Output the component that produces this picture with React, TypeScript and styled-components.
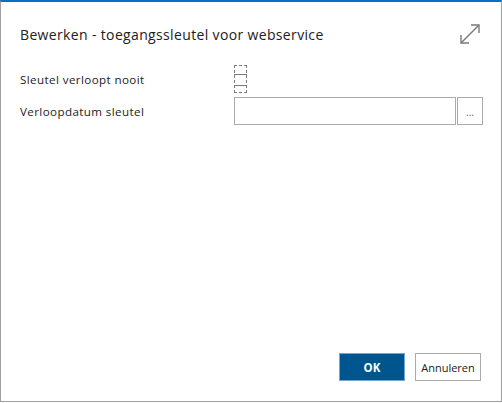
import styled, { createGlobalStyle } from "styled-components";

const GlobalStyle = createGlobalStyle`
  html, body { margin: 0; padding: 0; background: #ffffff; }
  body { font-family: "Open Sans", "Noto Sans", sans-serif; color: #212121; }
`;

const Dialog = styled.div`
  box-sizing: border-box;
  width: 502px;
  height: 402px;
  border: 1px solid #a0a0a0;
  border-top: 2px solid #0a6fc2;
  display: flex;
  flex-direction: column;
  background: #fff;
`;

const Header = styled.div`
  display: flex;
  align-items: center;
  justify-content: space-between;
  padding: 18px 19px 0 19px;
  height: 28px;
`;

const Title = styled.h1`
  margin: 0;
  font-size: 14px;
  letter-spacing: 0.35px;
  font-weight: 400;
  color: #212121;
`;

const ExpandButton = styled.button`
  border: none;
  background: none;
  padding: 0;
  width: 24px;
  height: 24px;
  display: flex;
  align-items: center;
  justify-content: center;
`;

const Form = styled.div`
  display: flex;
  flex-direction: column;
  padding: 17px 19px 0 19px;
  gap: 4px;
`;

const Row = styled.div`
  display: grid;
  grid-template-columns: 214px 1fr;
  align-items: center;
`;

const Label = styled.span`
  font-size: 11.6px;
  letter-spacing: 0.4px;
  color: #212121;
`;

const CheckField = styled.div`
  position: relative;
  box-sizing: border-box;
  width: 13px;
  height: 28px;
  border: 1px dashed #7a7a7a;
`;

const CheckLine = styled.div<{ $top: number }>`
  position: absolute;
  left: -1px;
  right: -1px;
  top: ${(p) => p.$top}px;
  height: 1px;
  background: #7a7a7a;
`;

const InputGroup = styled.div`
  display: flex;
  gap: 1px;
`;

const TextInput = styled.input`
  box-sizing: border-box;
  width: 222px;
  height: 28px;
  border: 1px solid #ababab;
  outline: none;
  padding: 0 6px;
  font-family: inherit;
`;

const LookupButton = styled.button`
  box-sizing: border-box;
  width: 26px;
  height: 28px;
  border: 1px solid #ababab;
  background: #fff;
  color: #666;
  font-size: 10px;
  padding: 2px 0 0;
  font-family: inherit;
`;

const Spacer = styled.div`
  flex: 1;
`;

const Footer = styled.div`
  display: flex;
  justify-content: flex-end;
  gap: 10px;
  padding: 0 20px 20px 0;
`;

const Button = styled.button<{ $primary?: boolean }>`
  box-sizing: border-box;
  width: 66px;
  height: 28px;
  font-family: inherit;
  font-size: ${(p) => (p.$primary ? "11.5px" : "11px")};
  font-weight: ${(p) => (p.$primary ? 700 : 400)};
  color: ${(p) => (p.$primary ? "#ffffff" : "#212121")};
  background: ${(p) => (p.$primary ? "#00558f" : "#ffffff")};
  border: 1px solid ${(p) => (p.$primary ? "#6fa8d6" : "#ababab")};
  padding: 0;
`;

const ExpandIcon = () => (
  <svg width="22" height="22" viewBox="0 0 22 22" fill="none" stroke="#7a7a7a" strokeWidth="1.4">
    <path d="M2 20 L20 2" />
    <path d="M12 2 H20 V10" />
    <path d="M2 12 V20 H10" />
  </svg>
);

export default function App() {
  return (
    <>
      <GlobalStyle />
      <Dialog>
        <Header>
          <Title>Bewerken - toegangssleutel voor webservice</Title>
          <ExpandButton aria-label="Maximaliseren">
            <ExpandIcon />
          </ExpandButton>
        </Header>
        <Form>
          <Row>
            <Label>Sleutel verloopt nooit</Label>
            <CheckField>
              <CheckLine $top={8} />
              <CheckLine $top={19} />
            </CheckField>
          </Row>
          <Row>
            <Label>Verloopdatum sleutel</Label>
            <InputGroup>
              <TextInput />
              <LookupButton>...</LookupButton>
            </InputGroup>
          </Row>
        </Form>
        <Spacer />
        <Footer>
          <Button $primary>OK</Button>
          <Button>Annuleren</Button>
        </Footer>
      </Dialog>
    </>
  );
}
